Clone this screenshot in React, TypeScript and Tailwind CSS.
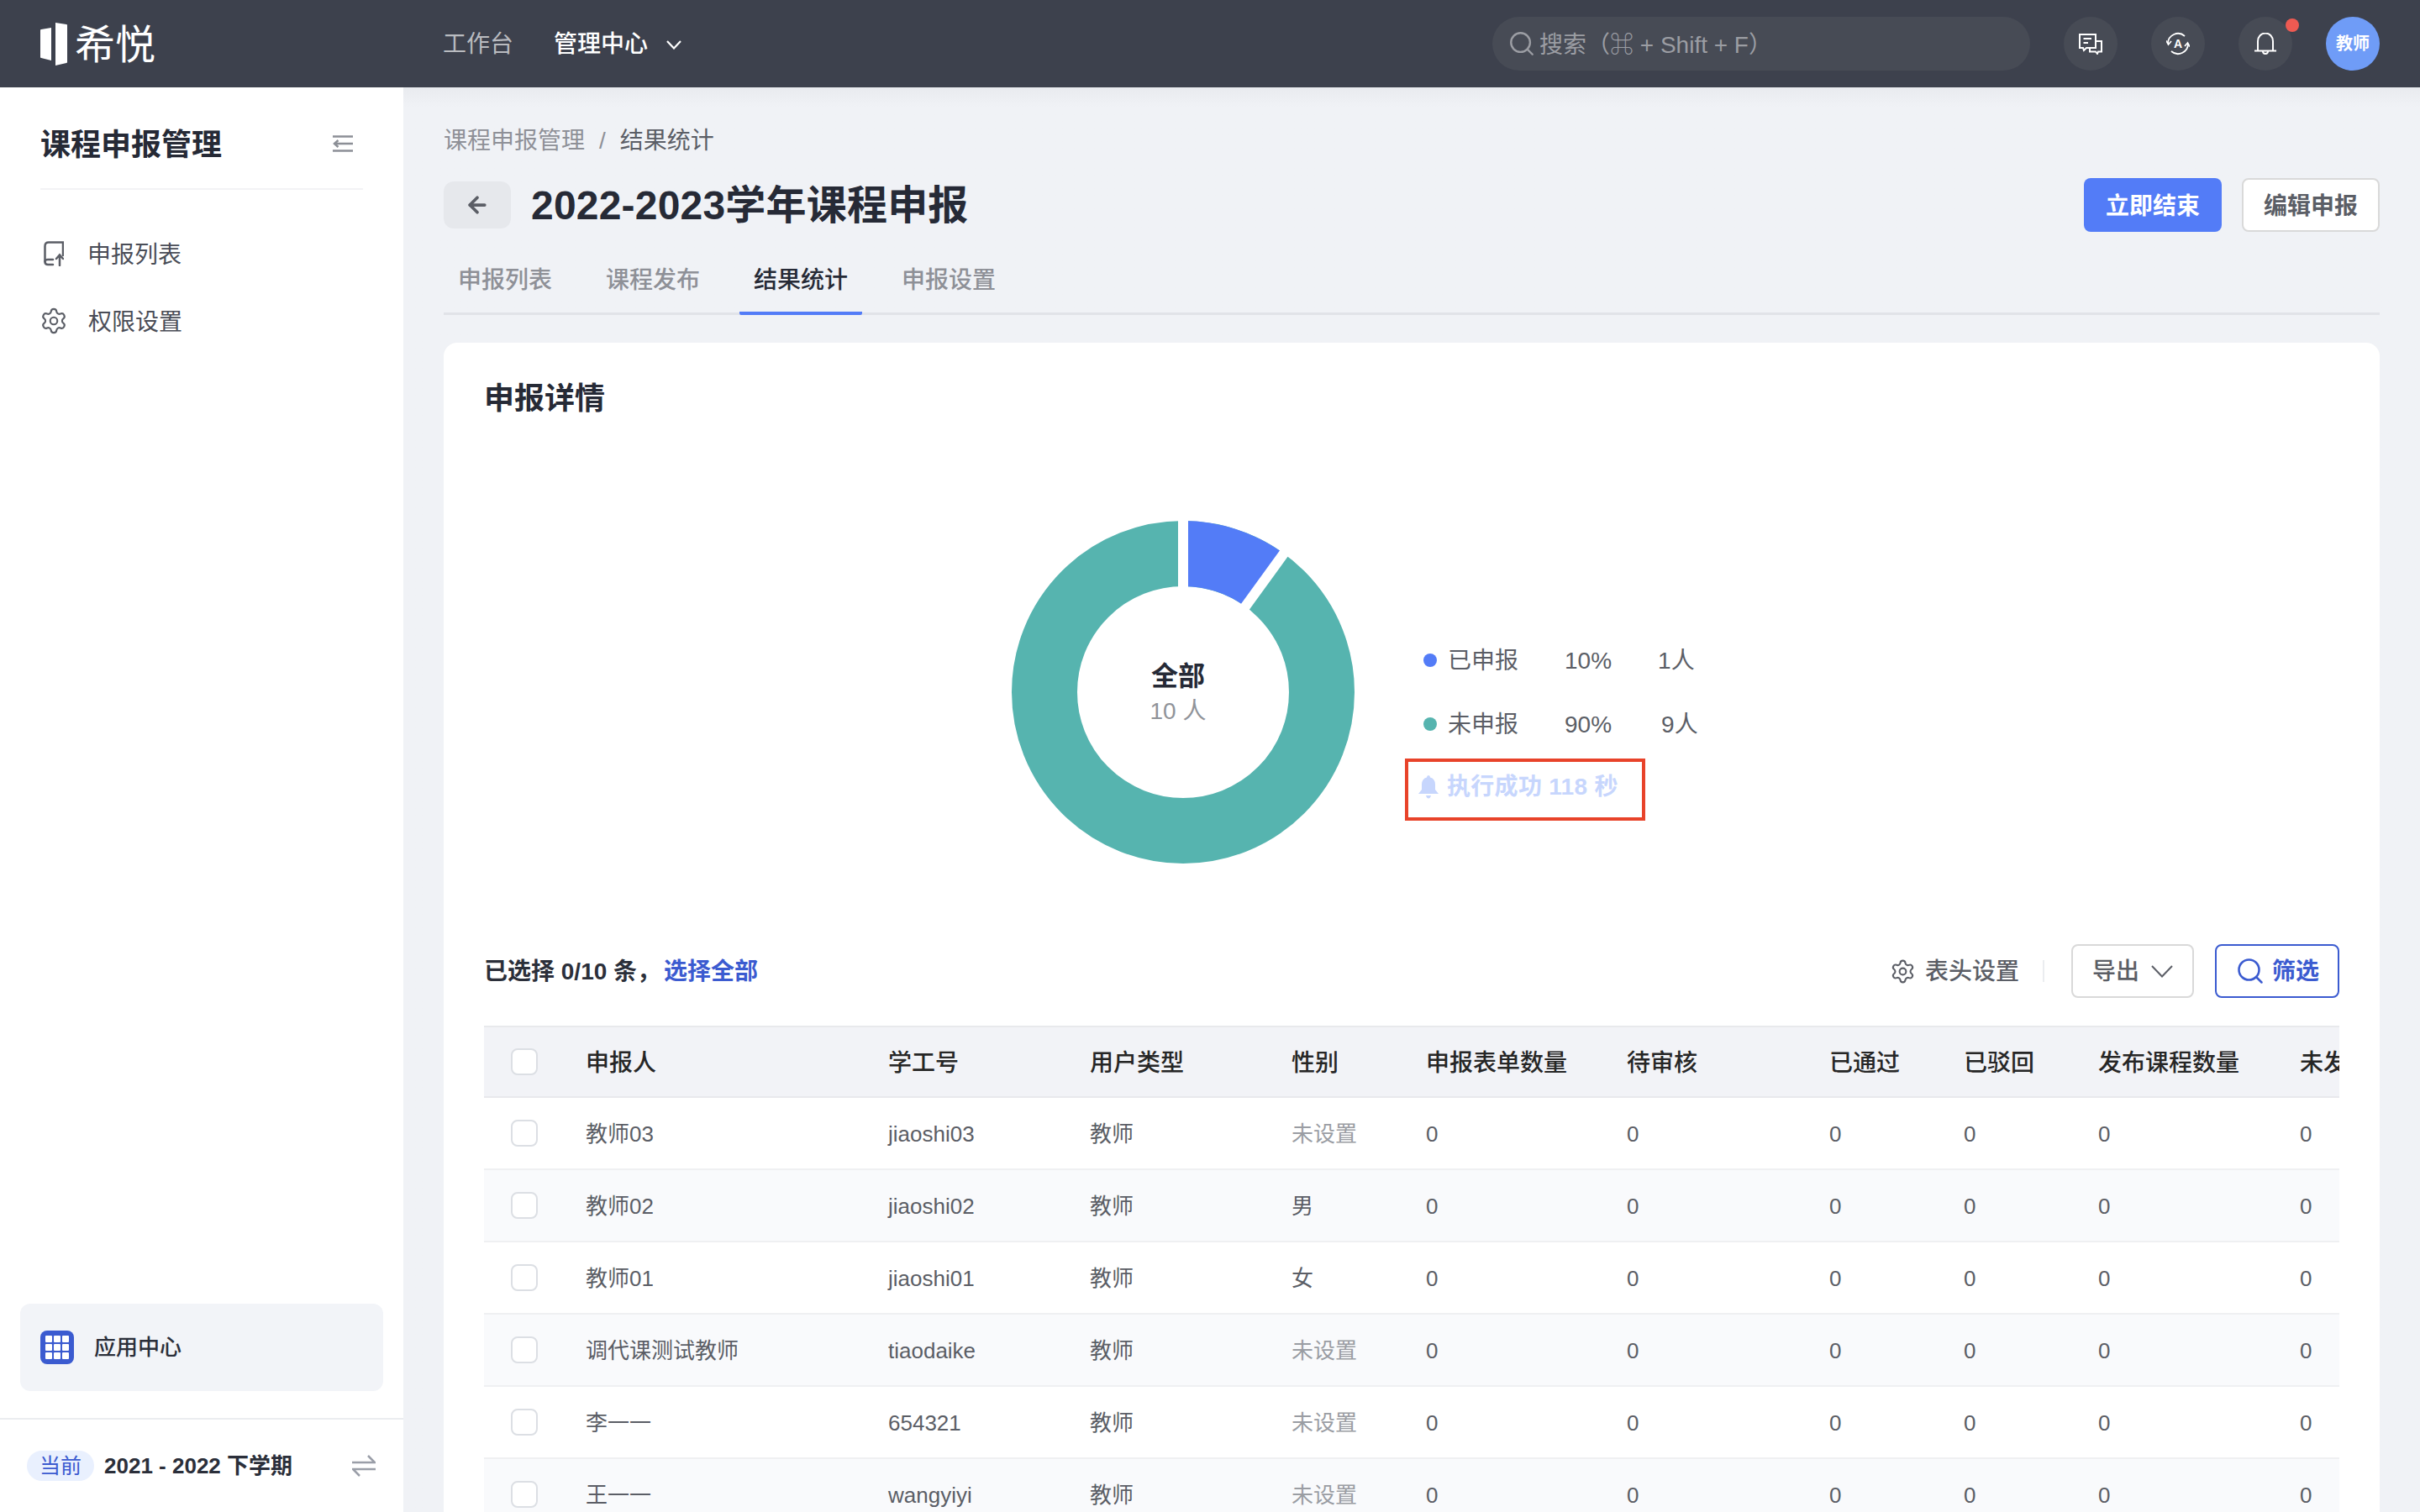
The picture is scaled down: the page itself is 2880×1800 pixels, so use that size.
import { ArrowLeft, Search, Settings } from "lucide-react";

const columns = ["申报人", "学工号", "用户类型", "性别", "申报表单数量", "待审核", "已通过", "已驳回", "发布课程数量", "未发布课程数量"];

const rows = [
  { name: "教师03", id: "jiaoshi03", gender: "未设置" },
  { name: "教师02", id: "jiaoshi02", gender: "男" },
  { name: "教师01", id: "jiaoshi01", gender: "女" },
  { name: "调代课测试教师", id: "tiaodaike", gender: "未设置" },
  { name: "李一一", id: "654321", gender: "未设置" },
  { name: "王一一", id: "wangyiyi", gender: "未设置" },
];

const gridCols = "grid grid-cols-[121px_360px_240px_240px_160px_239px_241px_160px_160px_240px_240px] items-center [&>span]:pt-[3px]";

const Checkbox = () => (
  <div className="ml-[32px] w-[32px] h-[32px] rounded-[8px] border-2 border-[#dcdfe4] bg-white" />
);

const RoundIcon = ({ children }: { children: React.ReactNode }) => (
  <div className="w-[64px] h-[64px] rounded-full bg-[#474b55] flex items-center justify-center">{children}</div>
);

const App = () => {
  return (
    <div className="h-screen overflow-hidden flex flex-col bg-[#f0f2f6] font-['Liberation_Sans','Noto_Sans_CJK_SC',sans-serif]">
      {/* top bar */}
      <header className="h-[104px] shrink-0 bg-[#3d414d] flex items-center pr-[48px]">
        <div className="w-[527px] pl-[48px] flex items-center gap-[9px]">
          <svg width="32" height="52" viewBox="0 0 32 52" fill="#ffffff">
            <path d="M1 9 L13 7 V46 L1 43 Q0 43 0 42 V10 Q0 9 1 9 Z" />
            <path d="M18 1 L31 3 Q32 3 32 4 V48 Q32 49 31 49 L18 52 Z" />
          </svg>
          <span className="pt-[3px] text-[48px] leading-none font-normal text-white">希悦</span>
        </div>
        <nav className="pt-[2px] flex items-center gap-[48px] text-[28px]">
          <span className="text-[#b9bbc0]">工作台</span>
          <span className="flex items-center gap-[22px] text-white font-medium">
            管理中心
            <svg width="18" height="11" viewBox="0 0 18 11" fill="none" stroke="#ffffff" strokeWidth="2.2">
              <path d="M1 1 L9 9.5 L17 1" />
            </svg>
          </span>
        </nav>
        <div className="ml-auto flex items-center gap-[40px]">
          <div className="w-[640px] h-[64px] rounded-full bg-[#474b55] flex items-center pl-[18px] gap-[4px] text-[28px] text-[#9b9da3]">
            <Search size={34} strokeWidth={1.7} />
            <span className="pt-[3px]">搜索（⌘ + Shift + F）</span>
          </div>
          <RoundIcon>
            <svg width="28" height="25" viewBox="0 0 28 25" fill="none" stroke="#ffffff" strokeWidth="2">
              <path d="M1 1 H20 V17 H9 L6 20 L5 17 H1 Z" />
              <path d="M5.5 6 H15 M5.5 11 H11" />
              <path d="M13 17 V21.5 H20 L22 24 L23 21.5 H27 V9 H20" />
            </svg>
          </RoundIcon>
          <RoundIcon>
            <svg width="28" height="28" viewBox="0 0 28 28" fill="none" stroke="#ffffff" strokeWidth="1.8">
              <path d="M2 14 A12 12 0 0 1 22 5" />
              <path d="M26 14 A12 12 0 0 1 6 23" />
              <path d="M0 10.5 L2.5 15 L6 11" />
              <path d="M28 17.5 L25.5 13 L22 17" />
              <text x="14" y="19" textAnchor="middle" fontSize="14" fontWeight="700" fill="#ffffff" stroke="none">A</text>
            </svg>
          </RoundIcon>
          <div className="relative">
            <RoundIcon>
              <svg width="26" height="27" viewBox="0 0 26 27" fill="none" stroke="#ffffff" strokeWidth="2">
                <path d="M4 21 V10 A9 9.5 0 0 1 22 10 V21" />
                <path d="M0 21.5 H26" />
                <path d="M10 22 A3 3 0 0 0 16 22" />
              </svg>
            </RoundIcon>
            <div className="absolute top-[2px] right-[-8px] w-[16px] h-[16px] rounded-full bg-[#ee5a52]" />
          </div>
          <div className="w-[64px] h-[64px] rounded-full bg-[#6f9cf7] flex items-center justify-center text-[20px] font-bold text-white">
            教师
          </div>
        </div>
      </header>

      <div className="flex flex-1 min-h-0">
        {/* sidebar */}
        <aside className="w-[480px] shrink-0 bg-white flex flex-col">
          <div className="mx-[48px] h-[122px] pt-[14px] border-b-2 border-[#f2f3f5] flex items-center justify-between">
            <span className="pt-[3px] text-[36px] font-bold text-[#262a36]">课程申报管理</span>
            <svg className="mr-[12px]" width="24" height="20" viewBox="0 0 24 20" fill="none" stroke="#8c8f96" strokeWidth="2.5">
              <path d="M0 1.5 H24 M3 10 H24 M0 18.5 H24" />
              <path d="M6.5 6 L2 10 L6.5 14" />
            </svg>
          </div>
          <div className="mt-[36px] flex flex-col text-[28px] text-[#4a4d57]">
            <div className="h-[80px] pl-[52px] flex items-center gap-[28px]">
              <svg width="24" height="30" viewBox="0 0 24 30" fill="none" stroke="#5b5e66" strokeWidth="2.5" strokeLinecap="round">
                <path d="M23 17 V1.5 H6 Q1.5 1.5 1.5 6 V24.5 Q1.5 28 5 28 H11" />
                <path d="M1.5 24.5 Q1.5 22 5 22 H11" />
                <path d="M19 29 V17 M15 21 L19 16.5 L23 21" />
              </svg>
              <span className="pt-[3px]">申报列表</span>
            </div>
            <div className="h-[80px] pl-[47px] flex items-center gap-[24px]">
              <Settings size={34} strokeWidth={1.5} color="#5b5e66" />
              <span className="pt-[3px]">权限设置</span>
            </div>
          </div>
          <div className="mt-auto mx-[24px] h-[104px] rounded-[12px] bg-[#f2f4f8] flex items-center pl-[24px] gap-[24px]">
            <div className="w-[40px] h-[40px] rounded-[8px] bg-[#3b5bd0] grid grid-cols-3 gap-[2px] p-[6px]">
              {Array.from({ length: 9 }).map((_, i) => (
                <div key={i} className="bg-white rounded-[1px]" />
              ))}
            </div>
            <span className="text-[26px] font-medium text-[#2b2f3a]">应用中心</span>
          </div>
          <div className="mt-[32px] h-[112px] border-t-2 border-[#ebedf0] flex items-center pl-[32px] pr-[33px]">
            <span className="h-[36px] px-[15px] rounded-full bg-[#e9f0fe] text-[#3b5bd0] text-[25px] leading-[36px]">当前</span>
            <span className="ml-[12px] text-[26px] font-semibold text-[#2b2f3a]">2021 - 2022 下学期</span>
            <svg className="ml-auto" width="28" height="26" viewBox="0 0 28 26" fill="none" stroke="#9a9ea8" strokeWidth="2.5">
              <path d="M0 9 H27 L19 1" />
              <path d="M28 17 H1 L9 25" />
            </svg>
          </div>
        </aside>

        {/* main */}
        <main className="flex-1 min-w-0 px-[48px] bg-gradient-to-b from-[#e9ebef] to-[#f0f2f6] to-[1.4%]">
          <div className="pt-[45px] h-[82px] flex items-center text-[28px] text-[#8e9097]">
            <span>课程申报管理</span>
            <span className="mx-[17px]">/</span>
            <span className="text-[#5b5e66]">结果统计</span>
          </div>
          <div className="mt-[26px] flex items-center">
            <div className="w-[80px] h-[56px] rounded-[12px] bg-[#e6e8ec] flex items-center justify-center">
              <ArrowLeft size={30} strokeWidth={3} color="#5b5e66" />
            </div>
            <h1 className="ml-[24px] pt-[2px] text-[48px] leading-[62px] font-bold text-[#262a36] tracking-[0.2px]">2022-2023学年课程申报</h1>
            <button className="ml-auto w-[164px] h-[64px] pt-[3px] rounded-[8px] bg-[#537cf7] text-white text-[28px] font-semibold">立即结束</button>
            <button className="ml-[24px] w-[164px] h-[64px] pt-[3px] rounded-[8px] bg-white border-2 border-[#d9d9d9] text-[#5b5e66] text-[28px] font-semibold">编辑申报</button>
          </div>
          <div className="mt-[24px] h-[75px] border-b-[3px] border-[#e1e3e8] flex gap-[30px] text-[28px] font-medium">
            {["申报列表", "课程发布", "结果统计", "申报设置"].map((tab) => (
              <div
                key={tab}
                className={
                  tab === "结果统计"
                    ? "px-[17px] h-[75px] leading-[67px] text-[#262a36] border-b-[4px] border-[#537cf7] rounded-b-[2px]"
                    : "px-[17px] h-[75px] leading-[67px] text-[#8e9097]"
                }
              >
                {tab}
              </div>
            ))}
          </div>

          <section className="mt-[33px] rounded-t-[16px] bg-white px-[48px] pt-[42px] h-[1400px]">
            <h2 className="text-[36px] leading-[50px] -mb-[2px] font-bold text-[#262a36]">申报详情</h2>

            <div className="mt-[122px] ml-[628px] flex">
              <div className="relative w-[408px] h-[408px]">
                <svg width="408" height="408" viewBox="0 0 408 408" fill="none">
                  <circle cx="204" cy="204" r="165" stroke="#56b4af" strokeWidth="78" />
                  <path d="M204 39 A165 165 0 0 1 300.99 70.51" stroke="#537cf7" strokeWidth="78" />
                  <path d="M204 0 V100 M327.4 34.1 L268.7 115" stroke="#ffffff" strokeWidth="12" />
                </svg>
                <div className="absolute left-[134px] top-[161px] w-[128px] flex flex-col items-center">
                  <span className="text-[32px] leading-[48px] font-semibold text-[#262a36]">全部</span>
                  <span className="text-[28px] leading-[36px] text-[#909399]">10 人</span>
                </div>
              </div>
              <div className="ml-[82px] mt-[146px] flex flex-col text-[28px] text-[#5b5e66]">
                <div className="h-[40px] flex items-center gap-[55px]">
                  <span className="flex items-center gap-[13px]">
                    <span className="w-[16px] h-[16px] rounded-full bg-[#537cf7]" />
                    <span className="pt-[2px]">已申报</span>
                  </span>
                  <span className="pt-[2px]">10%</span>
                  <span className="pt-[2px]">1人</span>
                </div>
                <div className="mt-[36px] h-[40px] flex items-center gap-[55px]">
                  <span className="flex items-center gap-[13px]">
                    <span className="w-[16px] h-[16px] rounded-full bg-[#56b4af]" />
                    <span className="pt-[2px]">未申报</span>
                  </span>
                  <span className="pt-[2px]">90%</span>
                  <span className="pt-[2px] ml-[4px]">9人</span>
                </div>
                <div className="mt-[21px] -ml-[22px] w-[286px] h-[74px] border-4 border-[#e8432a] pl-[12px] pb-[6px] flex items-center gap-[10px] text-[#c7d6fd] font-bold tracking-[0.3px]">
                  <svg width="24" height="28" viewBox="0 0 24 28" fill="#c7d6fd">
                    <path d="M12 0 Q14 0 14 2.5 Q20 4 20 11 V17 L24 22 H0 L4 17 V11 Q4 4 10 2.5 Q10 0 12 0 Z" />
                    <path d="M9 24 H15 Q14 27.5 12 27.5 Q10 27.5 9 24 Z" />
                  </svg>
                  <span>执行成功 118 秒</span>
                </div>
              </div>
            </div>

            <div className="mt-[96px] h-[64px] flex items-center text-[28px]">
              <span className="pt-[2px] font-semibold text-[#2b2f3a]">已选择 0/10 条，</span>
              <span className="pt-[2px] ml-[4px] font-semibold text-[#3b5bd0]">选择全部</span>
              <div className="ml-auto flex items-center gap-[11px] font-medium text-[#5b5e66]">
                <Settings size={31} strokeWidth={1.6} />
                <span className="pt-[2px]">表头设置</span>
              </div>
              <div className="ml-[28px] mr-[32px] w-[2px] h-[26px] bg-[#ebedf0]" />
              <button className="w-[146px] h-[64px] rounded-[8px] border-2 border-[#d9d9d9] flex items-center justify-center gap-[14px] font-medium text-[#5b5e66]">
                <span className="pt-[2px]">导出</span>
                <svg width="26" height="15" viewBox="0 0 26 15" fill="none" stroke="#5b5e66" strokeWidth="2">
                  <path d="M1 1 L13 13.5 L25 1" />
                </svg>
              </button>
              <button className="ml-[25px] w-[148px] h-[64px] rounded-[8px] border-2 border-[#3b5bd0] flex items-center justify-center gap-[8px] font-semibold text-[#3b5bd0]">
                <Search size={36} strokeWidth={1.7} />
                <span className="pt-[2px]">筛选</span>
              </button>
            </div>

            <div className="mt-[33px] overflow-hidden">
              <div className={`${gridCols} h-[86px] bg-[#f2f3f7] border-y-2 border-[#e8e9ec] text-[28px] font-medium text-[#262626] whitespace-nowrap`}>
                <Checkbox />
                {columns.map((c) => (
                  <span key={c}>{c}</span>
                ))}
              </div>
              {rows.map((row, i) => (
                <div
                  key={row.name}
                  className={
                    i % 2 === 1
                      ? `${gridCols} h-[86px] bg-[#f9fafc] border-b-2 border-[#eff0f2] text-[26px] text-[#5b5e66] whitespace-nowrap`
                      : `${gridCols} h-[86px] bg-white border-b-2 border-[#eff0f2] text-[26px] text-[#5b5e66] whitespace-nowrap`
                  }
                >
                  <Checkbox />
                  <span>{row.name}</span>
                  <span>{row.id}</span>
                  <span>教师</span>
                  <span className={row.gender === "未设置" ? "text-[#9a9da3]" : ""}>{row.gender}</span>
                  {Array.from({ length: 6 }).map((_, n) => (
                    <span key={n}>0</span>
                  ))}
                </div>
              ))}
            </div>
          </section>
        </main>
      </div>
    </div>
  );
};

export default App;
